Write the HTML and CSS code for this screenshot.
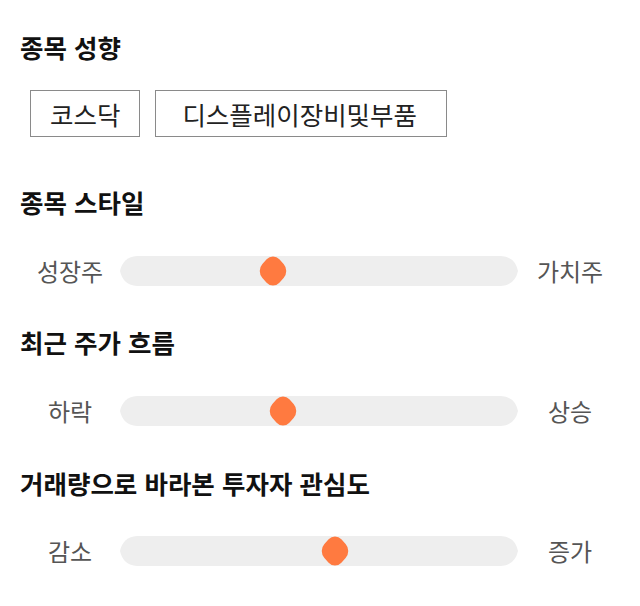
FILE: index.html
```html
<!DOCTYPE html>
<html lang="ko">
<head>
<meta charset="utf-8">
<link rel="stylesheet" href="styles.css">
</head>
<body>
<div class="page">
  <h2 class="title">종목 성향</h2>
  <div class="chips">
    <span class="chip">코스닥</span>
    <span class="chip chip-wide">디스플레이장비및부품</span>
  </div>

  <h2 class="title t2">종목 스타일</h2>
  <div class="slider s1">
    <span class="label">성장주</span>
    <div class="track"><span class="thumb" style="left: 38.4%"></span></div>
    <span class="label">가치주</span>
  </div>

  <h2 class="title t3">최근 주가 흐름</h2>
  <div class="slider s2">
    <span class="label">하락</span>
    <div class="track"><span class="thumb" style="left: 40.9%"></span></div>
    <span class="label">상승</span>
  </div>

  <h2 class="title t4">거래량으로 바라본 투자자 관심도</h2>
  <div class="slider s3">
    <span class="label">감소</span>
    <div class="track"><span class="thumb" style="left: 54%"></span></div>
    <span class="label">증가</span>
  </div>
</div>
</body>
</html>
```

FILE: styles.css
```css
html, body {
  margin: 0;
  padding: 0;
  background: #fff;
}
body {
  font-family: "Noto Sans CJK KR", "Noto Sans", sans-serif;
  color: #111;
}
.page {
  padding: 32px 20px 0 20px;
}
.title {
  margin: 0;
  font-size: 25.5px;
  line-height: 30px;
  font-weight: 700;
  color: #111;
}
.t2 { margin-top: 50px; }
.t3 { margin-top: 41px; }
.t4 { margin-top: 42px; }

.chips {
  display: flex;
  gap: 15px;
  margin: 28px 0 0 10px;
}
.chip {
  display: block;
  border: 1px solid #8a8a8a;
  line-height: 45px;
  padding: 0 19px;
  font-size: 25.5px;
  color: #222;
}
.chip-wide {
  padding: 0 29px 0 26px;
}

.slider {
  display: grid;
  grid-template-columns: 100px 398px 104px;
  align-items: center;
  height: 30px;
}
.s1, .s2 { margin-top: 39px; }
.s3 { margin-top: 38px; }
.label {
  text-align: center;
  font-size: 24px;
  line-height: 30px;
  color: #555;
}
.track {
  position: relative;
  height: 30px;
}
.track::before {
  content: "";
  position: absolute;
  inset: 0;
  background: #eeeeee;
  clip-path: path("M17 0 H381 Q395 1 398 15 Q395 29 381 30 H17 Q3 29 0 15 Q3 1 17 0 Z");
}
.thumb {
  position: absolute;
  top: 3px;
  width: 24px;
  height: 24px;
  margin-left: -12px;
  background: #ff7a40;
  border-radius: 9px;
  transform: scaleY(1.1) rotate(45deg);
}
```
